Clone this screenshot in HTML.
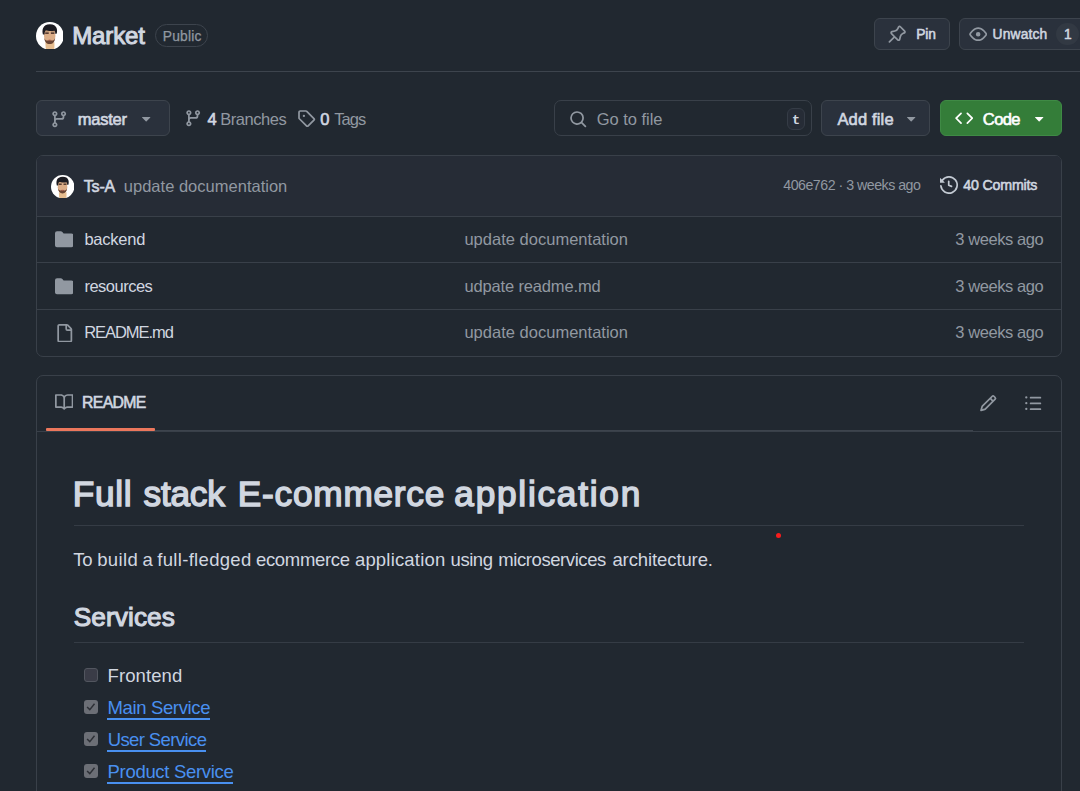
<!DOCTYPE html>
<html lang="en"><head><meta charset="utf-8"><title>Market</title>
<style>
html,body{margin:0;padding:0}
body{width:1080px;height:791px;overflow:hidden;background:#212830;position:relative;font-family:"Liberation Sans",sans-serif;color:#d1d7e0}
.t{position:absolute;white-space:pre;font-family:"Liberation Sans",sans-serif}
.i{position:absolute;display:block}
.b{position:absolute;box-sizing:border-box}
.hr{position:absolute;height:1px;background:#3d444d}
.btn{position:absolute;box-sizing:border-box;background:#2a313c;border:1px solid #3d444d;border-radius:6px}
.box{position:absolute;box-sizing:border-box;border:1px solid #394049;border-radius:7px}
.cb{position:absolute;box-sizing:border-box;width:14px;height:14px;border-radius:3px;background:#3a3c47;border:1px solid #52565f}
.cb.on{background:#6c6f76;border:0}
.cb svg{position:absolute;left:0;top:0}
a.t{text-decoration:none}
h1,p{margin:0;font-size:0;line-height:0}
.ul{position:absolute;height:2px;background:#4990f0}
</style></head><body>
<header>
<svg class="i" style="left:35.7px;top:21.7px" width="27.8" height="27.8" viewBox="0 0 28 28">
<defs><clipPath id="c3521"><circle cx="14" cy="14" r="14"/></clipPath><filter id="b3521" x="-10%" y="-10%" width="120%" height="120%"><feGaussianBlur stdDeviation="0.45"/></filter></defs>
<circle cx="14" cy="14" r="14" fill="#ffffff"/>
<g clip-path="url(#c3521)" filter="url(#b3521)">
<path d="M9.4 20.5 L9.9 28.5 L18.5 28.5 L18.6 20.5 Z" fill="#e6bd90"/>
<ellipse cx="13.8" cy="14.6" rx="5.7" ry="7.3" fill="#dcae88"/>
<rect x="8.3" y="6" width="11" height="9.5" rx="2" fill="#dcae88"/>
<path d="M8.3 16 C8.6 19.600 10.6 22.2 13.8 22.2 C17 22.2 19 19.600 19.3 16 C18.5 18.2 16.9 19 15.6 18.6 C14.8 17.900 12.8 17.900 12 18.6 C10.700 19 9.100 18.2 8.3 16 Z" fill="#6a4534"/>
<path d="M12.100 18.2 C13 17.500 14.6 17.500 15.5 18.2 C14.6 18.900 13 18.900 12.100 18.2 Z" fill="#c46a5c"/>
<path d="M7 12.600 C5.900 8.500 6.400 2.200 14 2.200 C21.500 2.200 21.900 8.500 20.800 11.800 L19.300 11.800 C19.500 10.600 19.200 9.600 18.600 8.700 C16 9.200 11.500 9 9.600 8.500 C8.900 9.600 8.600 11 8.600 12.600 Z" fill="#1f1c21"/>
<path d="M9.300 11.500 h3.500 M15 11.500 h3.500" stroke="#5b3d30" stroke-width="1.200" fill="none"/>
<path d="M9.300 10.300 h3.500 M15 10.300 h3.500" stroke="#3a2a25" stroke-width="0.600" fill="none"/>
</g></svg>
<span class="t" style="left:72.18px;top:24px;font-size:24px;line-height:24px;font-weight:400;-webkit-text-stroke:1.01px currentColor;color:#d1d7e0;letter-spacing:-0.096px;">Market</span>
<span class="b" style="left:155px;top:24.2px;width:53px;height:22.5px;border:1px solid #3d444d;border-radius:12px"></span>
<span class="t" style="left:162.73px;top:30px;font-size:13.8px;line-height:13.8px;font-weight:400;color:#9198a1;letter-spacing:0.224px;-webkit-text-stroke:0.25px #9198a1">Public</span>
<div class="btn" style="left:874px;top:18.3px;width:75.700px;height:31.600px"></div>
<svg class="i" style="left:888.3px;top:25.0px" width="18.4" height="18.4" viewBox="0 0 16 16" fill="#9198a1"><path d="m11.294.984 3.722 3.722a1.75 1.75 0 0 1-.504 2.826l-1.327.613a3.089 3.089 0 0 0-1.707 2.084l-.584 2.454c-.317 1.332-1.972 1.8-2.94.832L5.75 11.311 1.78 15.28a.749.749 0 1 1-1.060-1.060l3.969-3.970-2.204-2.204c-.968-.968-.5-2.623.832-2.940l2.454-.584a3.08 3.08 0 0 0 2.084-1.707l.613-1.327a1.75 1.75 0 0 1 2.826-.504ZM6.283 9.723l2.732 2.731a.25.25 0 0 0 .42-.119l.584-2.454a4.586 4.586 0 0 1 2.537-3.098l1.328-.613a.25.25 0 0 0 .072-.404l-3.722-3.722a.25.25 0 0 0-.404.072l-.613 1.328a4.584 4.584 0 0 1-3.098 2.537l-2.454.584a.25.25 0 0 0-.119.42l2.731 2.732Z"/></svg>
<span class="t" style="left:916.35px;top:28px;font-size:13.8px;line-height:13.8px;font-weight:400;-webkit-text-stroke:0.52px currentColor;color:#d1d7e0;letter-spacing:-0.205px;">Pin</span>
<div class="btn" style="left:959.2px;top:18.3px;width:140px;height:31.600px"></div>
<svg class="i" style="left:969.0px;top:24.9px" width="18.4" height="18.4" viewBox="0 0 16 16" fill="#9198a1"><path d="M8 2c1.981 0 3.671.992 4.933 2.078 1.27 1.091 2.187 2.345 2.637 3.023a1.62 1.62 0 0 1 0 1.798c-.45.678-1.367 1.932-2.637 3.023C11.67 13.008 9.981 14 8 14c-1.981 0-3.671-.992-4.933-2.078C1.797 10.83.88 9.576.43 8.898a1.62 1.62 0 0 1 0-1.798c.45-.677 1.367-1.931 2.637-3.022C4.33 2.992 6.019 2 8 2ZM1.679 7.932a.12.12 0 0 0 0 .136c.411.622 1.241 1.75 2.366 2.717C5.176 11.758 6.527 12.5 8 12.500c1.473 0 2.825-.742 3.955-1.715 1.124-.967 1.954-2.096 2.366-2.717a.12.12 0 0 0 0-.136c-.412-.621-1.242-1.75-2.366-2.717C10.824 4.242 9.473 3.500 8 3.500c-1.473 0-2.825.742-3.955 1.715-1.124.967-1.954 2.096-2.366 2.717ZM8 10a2 2 0 1 1-.001-3.999A2 2 0 0 1 8 10Z"/></svg>
<span class="t" style="left:992.62px;top:28px;font-size:13.8px;line-height:13.8px;font-weight:400;-webkit-text-stroke:0.52px currentColor;color:#d1d7e0;letter-spacing:0.165px;">Unwatch</span>
<span class="b" style="left:1056.4px;top:23px;width:22.4px;height:22.4px;border-radius:12px;background:#323943"></span>
<span class="t" style="left:1064.05px;top:28px;font-size:13.8px;line-height:13.8px;font-weight:400;-webkit-text-stroke:0.52px currentColor;color:#d1d7e0;letter-spacing:0px;">1</span>
<div class="hr" style="left:36px;top:71px;width:1044px"></div>
</header>
<nav>
<div class="btn" style="left:36px;top:100px;width:133.500px;height:36px"></div>
<svg class="i" style="left:50.4px;top:109.9px" width="18.4" height="18.4" viewBox="0 0 16 16" fill="#9198a1"><path d="M9.5 3.25a2.25 2.25 0 1 1 3 2.122V6A2.5 2.5 0 0 1 10 8.5H6a1 1 0 0 0-1 1v1.128a2.251 2.251 0 1 1-1.5 0V5.372a2.25 2.25 0 1 1 1.5 0v1.836A2.493 2.493 0 0 1 6 7h4a1 1 0 0 0 1-1v-.628A2.25 2.25 0 0 1 9.5 3.25Zm-6 0a.75.75 0 1 0 1.5 0 .75.75 0 0 0-1.5 0Zm8.25-.75a.75.75 0 1 0 0 1.5.75.75 0 0 0 0-1.5ZM4.25 12a.75.75 0 1 0 0 1.5.75.75 0 0 0 0-1.5Z"/></svg>
<span class="t" style="left:77.8px;top:111px;font-size:16.5px;line-height:16.5px;font-weight:400;-webkit-text-stroke:0.63px currentColor;color:#d1d7e0;letter-spacing:-0.266px;">master</span>
<svg class="i" style="left:136.5px;top:109.0px" width="18.4" height="18.4" viewBox="0 0 16 16" fill="#9198a1"><path d="m4.427 7.427 3.396 3.396a.25.25 0 0 0 .354 0l3.396-3.396A.25.25 0 0 0 11.396 7H4.604a.25.25 0 0 0-.177.427Z"/></svg>
<svg class="i" style="left:184.1px;top:108.9px" width="18.4" height="18.4" viewBox="0 0 16 16" fill="#9198a1"><path d="M9.5 3.25a2.25 2.25 0 1 1 3 2.122V6A2.5 2.5 0 0 1 10 8.5H6a1 1 0 0 0-1 1v1.128a2.251 2.251 0 1 1-1.5 0V5.372a2.25 2.25 0 1 1 1.5 0v1.836A2.493 2.493 0 0 1 6 7h4a1 1 0 0 0 1-1v-.628A2.25 2.25 0 0 1 9.5 3.25Zm-6 0a.75.75 0 1 0 1.5 0 .75.75 0 0 0-1.5 0Zm8.25-.75a.75.75 0 1 0 0 1.5.75.75 0 0 0 0-1.5ZM4.25 12a.75.75 0 1 0 0 1.5.75.75 0 0 0 0-1.5Z"/></svg>
<span class="t" style="left:207.4px;top:111px;font-size:16.5px;line-height:16.5px;font-weight:400;-webkit-text-stroke:0.63px currentColor;color:#d1d7e0;letter-spacing:0px;">4</span><span class="t" style="left:220.22px;top:111px;font-size:16.5px;line-height:16.5px;font-weight:400;color:#9198a1;letter-spacing:-0.461px;">Branches</span>
<svg class="i" style="left:297.4px;top:108.7px" width="18.4" height="18.4" viewBox="0 0 16 16" fill="#9198a1"><path d="M1 7.775V2.75C1 1.784 1.784 1 2.75 1h5.025c.464 0 .91.184 1.238.513l6.25 6.25a1.75 1.75 0 0 1 0 2.474l-5.026 5.026a1.75 1.75 0 0 1-2.474 0l-6.25-6.25A1.752 1.752 0 0 1 1 7.775Zm1.5 0c0 .066.026.13.073.177l6.25 6.25a.25.25 0 0 0 .354 0l5.025-5.025a.25.25 0 0 0 0-.354l-6.25-6.25a.25.25 0 0 0-.177-.073H2.75a.25.25 0 0 0-.25.25ZM6 5a1 1 0 1 1 0 2 1 1 0 0 1 0-2Z"/></svg>
<span class="t" style="left:320.28px;top:111px;font-size:16.5px;line-height:16.5px;font-weight:400;-webkit-text-stroke:0.63px currentColor;color:#d1d7e0;letter-spacing:0px;">0</span><span class="t" style="left:334.21px;top:111px;font-size:16.5px;line-height:16.5px;font-weight:400;color:#9198a1;letter-spacing:-0.907px;">Tags</span>
<div class="box" style="left:553.700px;top:100px;width:258.300px;height:36px"></div>
<svg class="i" style="left:568.9px;top:110.3px" width="18.4" height="18.4" viewBox="0 0 16 16" fill="#9198a1"><path d="M10.68 11.74a6 6 0 0 1-7.922-8.982 6 6 0 0 1 8.982 7.922l3.04 3.04a.749.749 0 0 1-.326 1.275.749.749 0 0 1-.734-.215ZM11.5 7a4.499 4.499 0 1 0-8.997 0A4.499 4.499 0 0 0 11.5 7Z"/></svg>
<span class="t" style="left:596.69px;top:111px;font-size:16.5px;line-height:16.5px;font-weight:400;color:#9198a1;letter-spacing:-0.026px;">Go to file</span>
<span class="b" style="left:786.5px;top:108px;width:18.5px;height:22px;border:1px solid #353c46;border-radius:6px;background:#262c36"></span>
<span class="t" style="left:792.0px;top:114px;font-size:13.5px;line-height:13.5px;font-weight:700;color:#d1d7e0;letter-spacing:0px;font-family:'Liberation Mono', monospace;">t</span>
<div class="btn" style="left:821.200px;top:100px;width:109.300px;height:36px"></div>
<span class="t" style="left:837.44px;top:111px;font-size:16.5px;line-height:16.5px;font-weight:400;-webkit-text-stroke:0.63px currentColor;color:#d1d7e0;letter-spacing:0.156px;">Add file</span>
<svg class="i" style="left:901.8px;top:109.2px" width="18.4" height="18.4" viewBox="0 0 16 16" fill="#9198a1"><path d="m4.427 7.427 3.396 3.396a.25.25 0 0 0 .354 0l3.396-3.396A.25.25 0 0 0 11.396 7H4.604a.25.25 0 0 0-.177.427Z"/></svg>
<div class="btn" style="left:940px;top:100px;width:122.400px;height:36px;background:#347d39;border-color:#3f8a45"></div>
<svg class="i" style="left:954.5px;top:109.2px" width="18.4" height="18.4" viewBox="0 0 16 16" fill="#ffffff"><path d="m11.28 3.22 4.25 4.25a.75.75 0 0 1 0 1.06l-4.25 4.25a.749.749 0 0 1-1.275-.326.749.749 0 0 1 .215-.734L13.94 8l-3.72-3.72a.749.749 0 0 1 .326-1.275.749.749 0 0 1 .734.215Zm-6.56 0a.751.751 0 0 1 1.042.018.751.751 0 0 1 .018 1.042L2.06 8l3.72 3.72a.749.749 0 0 1-.326 1.275.749.749 0 0 1-.734-.215L.47 8.53a.75.75 0 0 1 0-1.06Z"/></svg>
<span class="t" style="left:982.87px;top:111px;font-size:16.5px;line-height:16.5px;font-weight:400;-webkit-text-stroke:0.63px currentColor;color:#ffffff;letter-spacing:-0.595px;">Code</span>
<svg class="i" style="left:1030.2px;top:109.2px" width="18.4" height="18.4" viewBox="0 0 16 16" fill="#ffffff"><path d="m4.427 7.427 3.396 3.396a.25.25 0 0 0 .354 0l3.396-3.396A.25.25 0 0 0 11.396 7H4.604a.25.25 0 0 0-.177.427Z"/></svg>
</nav>
<main>
<section class="box" style="left:36px;top:155px;width:1026px;height:201.500px"></section>
<div class="b" style="left:37px;top:156px;width:1024px;height:60px;background:#262c36;border-radius:5px 5px 0 0"></div>
<div class="hr" style="left:37px;top:215.700px;width:1024px;background:#394049"></div>
<div class="hr" style="left:37px;top:262px;width:1024px;background:#394049"></div>
<div class="hr" style="left:37px;top:309px;width:1024px;background:#394049"></div>
<svg class="i" style="left:51px;top:175px" width="23.4" height="23.4" viewBox="0 0 28 28">
<defs><clipPath id="c51175"><circle cx="14" cy="14" r="14"/></clipPath><filter id="b51175" x="-10%" y="-10%" width="120%" height="120%"><feGaussianBlur stdDeviation="0.45"/></filter></defs>
<circle cx="14" cy="14" r="14" fill="#ffffff"/>
<g clip-path="url(#c51175)" filter="url(#b51175)">
<path d="M9.4 20.5 L9.9 28.5 L18.5 28.5 L18.6 20.5 Z" fill="#e6bd90"/>
<ellipse cx="13.8" cy="14.6" rx="5.7" ry="7.3" fill="#dcae88"/>
<rect x="8.3" y="6" width="11" height="9.5" rx="2" fill="#dcae88"/>
<path d="M8.3 16 C8.6 19.600 10.6 22.2 13.8 22.2 C17 22.2 19 19.600 19.3 16 C18.5 18.2 16.9 19 15.6 18.6 C14.8 17.900 12.8 17.900 12 18.6 C10.700 19 9.100 18.2 8.3 16 Z" fill="#6a4534"/>
<path d="M12.100 18.2 C13 17.500 14.6 17.500 15.5 18.2 C14.6 18.900 13 18.900 12.100 18.2 Z" fill="#c46a5c"/>
<path d="M7 12.600 C5.900 8.500 6.400 2.200 14 2.200 C21.500 2.200 21.900 8.500 20.800 11.800 L19.300 11.800 C19.500 10.600 19.200 9.600 18.600 8.700 C16 9.200 11.500 9 9.600 8.500 C8.900 9.600 8.600 11 8.600 12.600 Z" fill="#1f1c21"/>
<path d="M9.300 11.500 h3.500 M15 11.500 h3.500" stroke="#5b3d30" stroke-width="1.200" fill="none"/>
<path d="M9.300 10.300 h3.500 M15 10.300 h3.500" stroke="#3a2a25" stroke-width="0.600" fill="none"/>
</g></svg>
<span class="t" style="left:83.7px;top:179px;font-size:16px;line-height:16px;font-weight:400;-webkit-text-stroke:0.61px currentColor;color:#d1d7e0;letter-spacing:-0.155px;">Ts-A</span><span class="t" style="left:123.8px;top:178px;font-size:16.5px;line-height:16.5px;font-weight:400;color:#9198a1;letter-spacing:0.011px;">update documentation</span><span class="t" style="left:783.26px;top:178px;font-size:14.2px;line-height:14.2px;font-weight:400;color:#9198a1;letter-spacing:-0.493px;">406e762 · 3 weeks ago</span>
<svg class="i" style="left:939.7px;top:175.8px" width="18" height="18" viewBox="0 0 16 16" fill="#c3cad3"><path d="m.427 1.927 1.215 1.215a8.002 8.002 0 1 1-1.6 5.685.75.75 0 1 1 1.493-.154 6.5 6.5 0 1 0 1.18-4.458l1.358 1.358A.25.25 0 0 1 3.896 6H.25A.25.25 0 0 1 0 5.750V2.104a.25.25 0 0 1 .427-.177ZM7.75 4a.75.75 0 0 1 .75.75v2.992l2.028.812a.75.75 0 0 1-.557 1.392l-2.5-1A.751.751 0 0 1 7 8.25v-3.5A.75.75 0 0 1 7.75 4Z"/></svg>
<span class="t" style="left:963.2px;top:178px;font-size:14.2px;line-height:14.2px;font-weight:400;-webkit-text-stroke:0.54px currentColor;color:#d1d7e0;letter-spacing:-0.162px;">40 Commits</span>
<svg class="i" style="left:55.0px;top:230.3px" width="18.4" height="18.4" viewBox="0 0 16 16" fill="#9198a1"><path d="M1.75 1A1.75 1.75 0 0 0 0 2.75v10.5C0 14.216.784 15 1.75 15h12.5A1.75 1.75 0 0 0 16 13.25v-8.5A1.75 1.75 0 0 0 14.25 3H7.5a.25.25 0 0 1-.2-.1l-.9-1.2C6.07 1.260 5.55 1 5 1H1.75Z"/></svg>
<span class="t" style="left:84.4px;top:231px;font-size:16.5px;line-height:16.5px;font-weight:400;color:#d1d7e0;letter-spacing:-0.235px;">backend</span><span class="t" style="left:464.4px;top:231px;font-size:16.5px;line-height:16.5px;font-weight:400;color:#9198a1;letter-spacing:0.016px;">update documentation</span><span class="t" style="left:955.33px;top:231px;font-size:16.5px;line-height:16.5px;font-weight:400;color:#9198a1;letter-spacing:-0.439px;">3 weeks ago</span>
<svg class="i" style="left:55.0px;top:277.1px" width="18.4" height="18.4" viewBox="0 0 16 16" fill="#9198a1"><path d="M1.75 1A1.75 1.75 0 0 0 0 2.75v10.5C0 14.216.784 15 1.75 15h12.5A1.75 1.75 0 0 0 16 13.25v-8.5A1.75 1.75 0 0 0 14.25 3H7.5a.25.25 0 0 1-.2-.1l-.9-1.2C6.07 1.260 5.55 1 5 1H1.75Z"/></svg>
<span class="t" style="left:84.4px;top:278px;font-size:16.5px;line-height:16.5px;font-weight:400;color:#d1d7e0;letter-spacing:-0.5px;">resources</span><span class="t" style="left:464.4px;top:278px;font-size:16.5px;line-height:16.5px;font-weight:400;color:#9198a1;letter-spacing:-0.147px;">udpate readme.md</span><span class="t" style="left:955.33px;top:278px;font-size:16.5px;line-height:16.5px;font-weight:400;color:#9198a1;letter-spacing:-0.439px;">3 weeks ago</span>
<svg class="i" style="left:55.0px;top:324.0px" width="18.4" height="18.4" viewBox="0 0 16 16" fill="#9198a1"><path d="M2 1.75C2 .784 2.784 0 3.75 0h6.586c.464 0 .909.184 1.237.513l2.914 2.914c.329.328.513.773.513 1.237v9.586A1.75 1.75 0 0 1 13.25 16h-9.5A1.75 1.75 0 0 1 2 14.25Zm1.75-.25a.25.25 0 0 0-.25.25v12.5c0 .138.112.25.25.25h9.5a.25.25 0 0 0 .25-.25V6h-2.75A1.75 1.75 0 0 1 9 4.25V1.5Zm6.75.062V4.25c0 .138.112.25.25.25h2.688l-.011-.013-2.914-2.914-.013-.011Z"/></svg>
<span class="t" style="left:84.23px;top:324px;font-size:16.5px;line-height:16.5px;font-weight:400;color:#d1d7e0;letter-spacing:-1.049px;">README.md</span><span class="t" style="left:464.4px;top:324px;font-size:16.5px;line-height:16.5px;font-weight:400;color:#9198a1;letter-spacing:0.016px;">update documentation</span><span class="t" style="left:955.33px;top:324px;font-size:16.5px;line-height:16.5px;font-weight:400;color:#9198a1;letter-spacing:-0.439px;">3 weeks ago</span>
<article class="box" style="left:36px;top:375px;width:1026px;height:440px;border-bottom-left-radius:0;border-bottom-right-radius:0"></article>
<div class="hr" style="left:37px;top:431px;width:1024px;background:#394049"></div>
<div class="hr" style="left:46px;top:430px;width:926.500px;background:#3d444d"></div>
<div class="b" style="left:45.800px;top:427.500px;width:109.200px;height:3.300px;background:#ec775c;border-radius:1px"></div>
<svg class="i" style="left:55.0px;top:392.8px" width="18.4" height="18.4" viewBox="0 0 16 16" fill="#9198a1"><path d="M0 1.75A.75.75 0 0 1 .75 1h4.253c1.227 0 2.317.59 3 1.501A3.743 3.743 0 0 1 11.006 1h4.245a.75.75 0 0 1 .75.75v10.5a.75.75 0 0 1-.75.75h-4.507a2.25 2.25 0 0 0-1.591.659l-.622.621a.75.75 0 0 1-1.06 0l-.622-.621A2.25 2.25 0 0 0 5.258 13H.75a.75.75 0 0 1-.75-.75Zm7.251 10.324.004-5.073-.002-2.253A2.25 2.25 0 0 0 5.003 2.5H1.5v9h3.757a3.75 3.75 0 0 1 1.994.574ZM8.755 4.75l-.004 7.322a3.752 3.752 0 0 1 1.992-.572H14.5v-9h-3.495a2.25 2.25 0 0 0-2.25 2.25Z"/></svg>
<span class="t" style="left:82.12px;top:395px;font-size:15.8px;line-height:15.8px;font-weight:400;-webkit-text-stroke:0.6px currentColor;color:#d1d7e0;letter-spacing:-0.684px;">README</span>
<svg class="i" style="left:979.4px;top:394.4px" width="18.4" height="18.4" viewBox="0 0 16 16" fill="#9198a1"><path d="M11.013 1.427a1.75 1.75 0 0 1 2.474 0l1.086 1.086a1.75 1.75 0 0 1 0 2.474l-8.61 8.61c-.21.21-.47.364-.756.445l-3.251.93a.75.75 0 0 1-.927-.928l.929-3.25c.081-.286.235-.547.445-.758l8.61-8.61Zm.176 4.823L9.75 4.81l-6.286 6.287a.253.253 0 0 0-.064.108l-.558 1.953 1.953-.558a.253.253 0 0 0 .108-.064Zm1.238-3.763a.25.25 0 0 0-.354 0L10.811 3.75l1.439 1.44 1.263-1.263a.25.25 0 0 0 0-.354Z"/></svg>
<svg class="i" style="left:1024.2px;top:394.4px" width="18.4" height="18.4" viewBox="0 0 16 16" fill="#9198a1"><path d="M5.75 2.5h8.5a.75.75 0 0 1 0 1.5h-8.5a.75.75 0 0 1 0-1.5Zm0 5h8.5a.75.75 0 0 1 0 1.5h-8.5a.75.75 0 0 1 0-1.5Zm0 5h8.5a.75.75 0 0 1 0 1.5h-8.5a.75.75 0 0 1 0-1.5ZM2 14a1 1 0 1 1 0-2 1 1 0 0 1 0 2Zm1-6a1 1 0 1 1-2 0 1 1 0 0 1 2 0ZM2 4a1 1 0 1 1 0-2 1 1 0 0 1 0 2Z"/></svg>
<h1><span class="t" style="left:72.8px;top:476px;font-size:35.2px;line-height:35.2px;font-weight:400;-webkit-text-stroke:1.48px currentColor;color:#d1d7e0;letter-spacing:0.703px;">Full</span> <span class="t" style="left:143.52px;top:476px;font-size:35.2px;line-height:35.2px;font-weight:400;-webkit-text-stroke:1.48px currentColor;color:#d1d7e0;letter-spacing:-0.221px;">stack</span> <span class="t" style="left:237.8px;top:476px;font-size:35.2px;line-height:35.2px;font-weight:400;-webkit-text-stroke:1.48px currentColor;color:#d1d7e0;letter-spacing:0.787px;">E-commerce</span> <span class="t" style="left:454.37px;top:476px;font-size:35.2px;line-height:35.2px;font-weight:400;-webkit-text-stroke:1.48px currentColor;color:#d1d7e0;letter-spacing:1.763px;">application</span></h1>
<div class="hr" style="left:73.500px;top:524.700px;width:950.500px;background:#353c45"></div>
<p><span class="t" style="left:73.35px;top:551px;font-size:18.5px;line-height:18.5px;font-weight:400;color:#d1d7e0;letter-spacing:-0.45px;">To</span> <span class="t" style="left:97.19px;top:551px;font-size:18.5px;line-height:18.5px;font-weight:400;color:#d1d7e0;letter-spacing:0.352px;">build</span> <span class="t" style="left:142.53px;top:551px;font-size:18.5px;line-height:18.5px;font-weight:400;color:#d1d7e0;letter-spacing:0px;">a</span> <span class="t" style="left:157.33px;top:551px;font-size:18.5px;line-height:18.5px;font-weight:400;color:#d1d7e0;letter-spacing:0.307px;">full-fledged</span> <span class="t" style="left:255.95px;top:551px;font-size:18.5px;line-height:18.5px;font-weight:400;color:#d1d7e0;letter-spacing:-0.319px;">ecommerce</span> <span class="t" style="left:354.93px;top:551px;font-size:18.5px;line-height:18.5px;font-weight:400;color:#d1d7e0;letter-spacing:0.183px;">application</span> <span class="t" style="left:450.59px;top:551px;font-size:18.5px;line-height:18.5px;font-weight:400;color:#d1d7e0;letter-spacing:-0.46px;">using</span> <span class="t" style="left:498.25px;top:551px;font-size:18.5px;line-height:18.5px;font-weight:400;color:#d1d7e0;letter-spacing:-0.419px;">microservices</span> <span class="t" style="left:612.43px;top:551px;font-size:18.5px;line-height:18.5px;font-weight:400;color:#d1d7e0;letter-spacing:-0.101px;">architecture.</span></p>
<span class="t" style="left:73.75px;top:604px;font-size:26.2px;line-height:26.2px;font-weight:400;-webkit-text-stroke:1.1px currentColor;color:#d1d7e0;letter-spacing:0.093px;">Services</span>
<div class="hr" style="left:73.500px;top:642px;width:950.500px;background:#353c45"></div>
<span class="cb" style="left:84.2px;top:668px"></span><span class="t" style="left:107.56px;top:667px;font-size:18.5px;line-height:18.5px;font-weight:400;color:#d1d7e0;letter-spacing:0.091px;">Frontend</span>
<span class="cb on" style="left:84.2px;top:700.1px"><svg width="13.5" height="13.5" viewBox="0 0 14 14"><path d="M3.2 7.3 L6 10 L10.900 3.900" stroke="#2d3036" stroke-width="1.5" fill="none"/></svg></span><span class="t" style="left:107.56px;top:699px;font-size:18.5px;line-height:18.5px;font-weight:400;color:#4990f0;letter-spacing:-0.368px;">Main Service</span><div class="ul" style="left:107px;top:718px;width:103.4px"></div>
<span class="cb on" style="left:84.2px;top:732.2px"><svg width="13.5" height="13.5" viewBox="0 0 14 14"><path d="M3.2 7.3 L6 10 L10.900 3.900" stroke="#2d3036" stroke-width="1.5" fill="none"/></svg></span><span class="t" style="left:107.65px;top:731px;font-size:18.5px;line-height:18.5px;font-weight:400;color:#4990f0;letter-spacing:-0.599px;">User Service</span><div class="ul" style="left:107px;top:750px;width:98.8px"></div>
<span class="cb on" style="left:84.2px;top:764.3px"><svg width="13.5" height="13.5" viewBox="0 0 14 14"><path d="M3.2 7.3 L6 10 L10.900 3.900" stroke="#2d3036" stroke-width="1.5" fill="none"/></svg></span><span class="t" style="left:107.56px;top:763px;font-size:18.5px;line-height:18.5px;font-weight:400;color:#4990f0;letter-spacing:-0.311px;">Product Service</span><div class="ul" style="left:107px;top:782px;width:125.8px"></div>
<span class="b" style="left:776.300px;top:532.900px;width:5px;height:5px;border-radius:2.5px;background:#f81c1c"></span>
</main>
</body></html>
